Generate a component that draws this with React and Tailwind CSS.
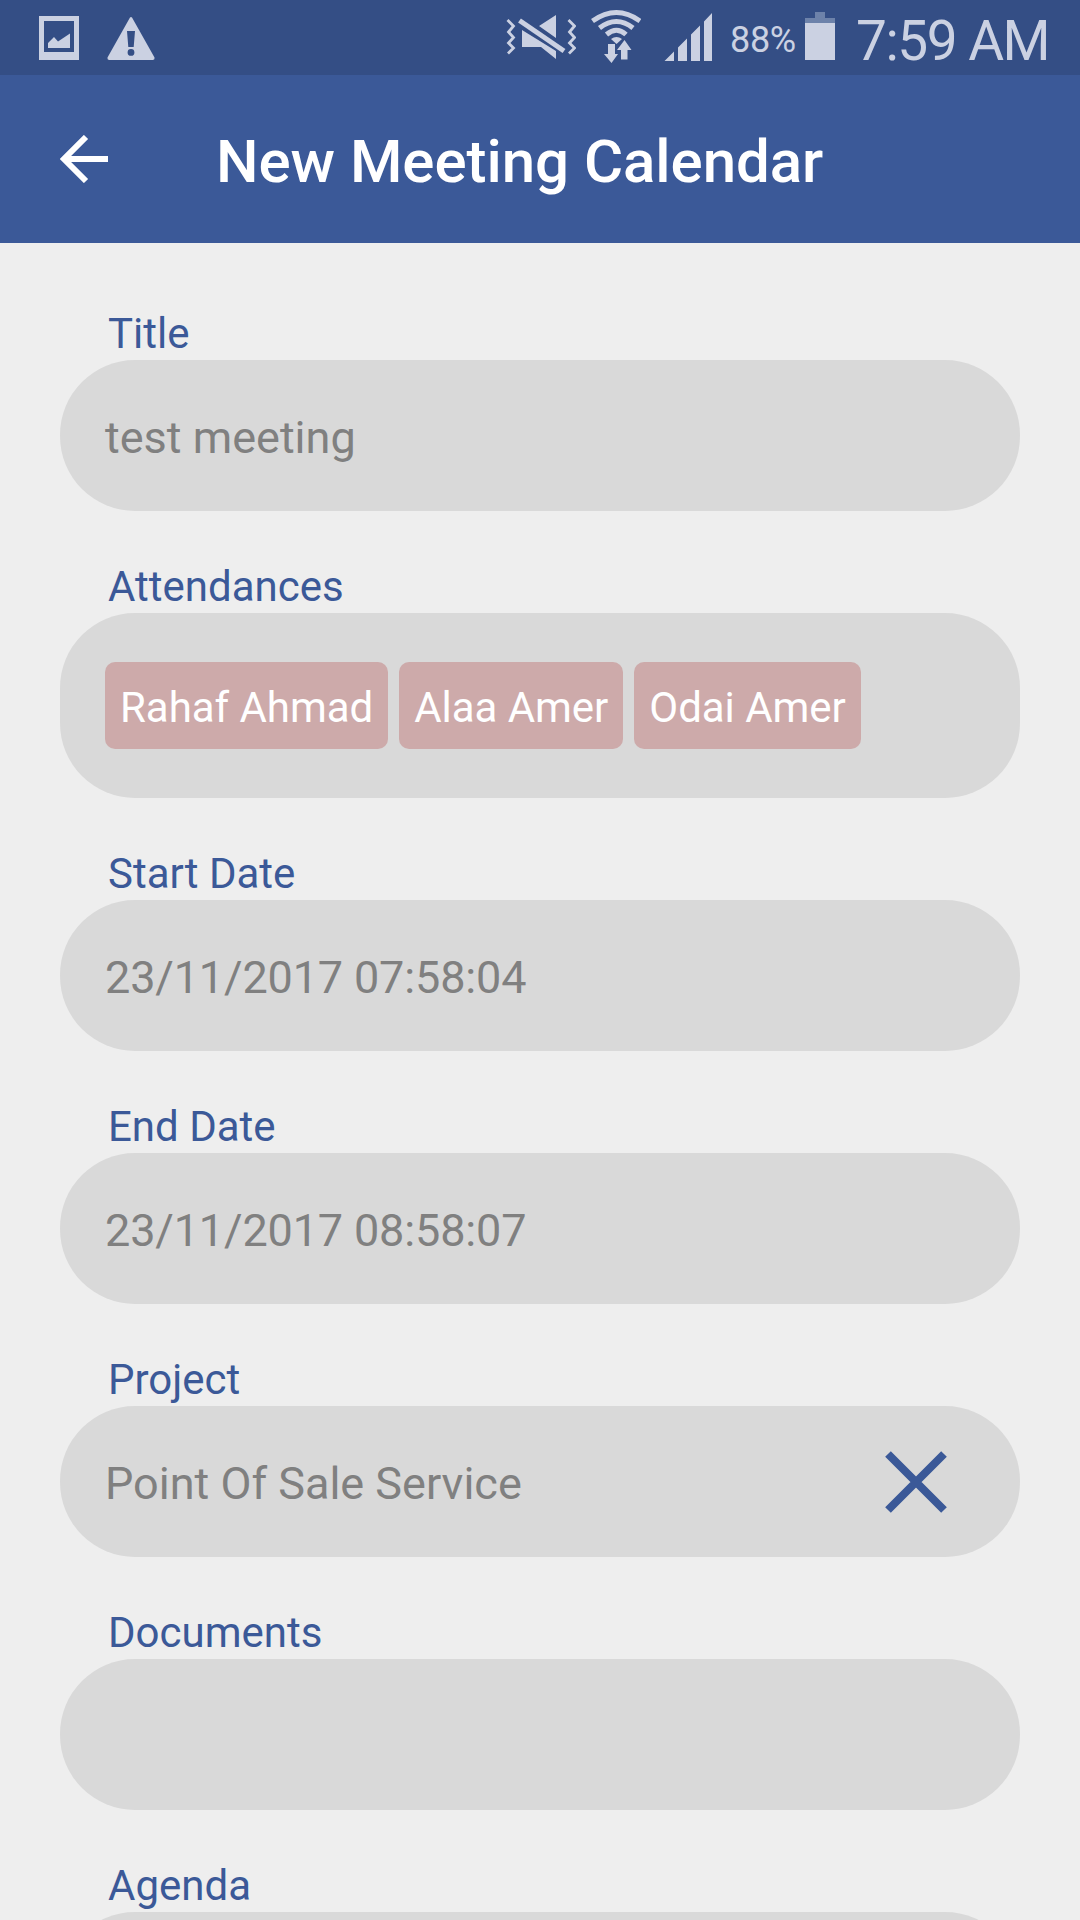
const font = "font-['Roboto',sans-serif]";

function StatusBar() {
  return (
    <div className="flex h-[75px] shrink-0 items-start bg-[#344e85] text-[#cbd1e2]">
      <svg className="ml-[39px] mt-4 h-11 w-10 shrink-0" viewBox="0 0 40 44" fill="currentColor">
        <path fillRule="evenodd" d="M0 0H40V44H0ZM5 5V36H35V5Z" />
        <path d="M9 32V27L15 21L19 25.500L31 17.500V32Z" />
      </svg>
      <svg className="ml-7 mt-4 h-11 w-12 shrink-0" viewBox="107 16 48 44" fill="currentColor">
        <path fillRule="evenodd" d="M130 17.500Q131 16.500 132 17.500L154.500 57.500Q155 59.500 153 60H109Q107 59.500 107.500 57.500ZM127 31L128.300 47H133.700L135 31ZM131 49A3.400 3.400 0 1 0 131 55.800A3.400 3.400 0 1 0 131 49Z" />
      </svg>
      <div className="flex-1" />
      <svg className="h-[75px] w-[70px] shrink-0" viewBox="506 0 70 75" fill="currentColor">
        <path d="M556 15V38L539 26ZM522 30L556 51V59L541 47H522Z" />
        <path d="M519.500 20.500L564 51" stroke="#344e85" strokeWidth="8" fill="none" />
        <path d="M519.500 20.500L564 51" stroke="currentColor" strokeWidth="5" fill="none" />
        <path d="M507.500 20L513.500 26L508.500 32L513.500 37.500L508.500 43L513.500 48L508 53.500M568.500 20L574.500 26L569.500 32L574.500 37.500L569.500 43L574.500 48L569 53.500" stroke="currentColor" strokeWidth="2.800" fill="none" />
      </svg>
      <svg className="ml-[15px] h-[75px] w-[50px] shrink-0" viewBox="591 0 50 75" fill="currentColor">
        <g fill="none" stroke="currentColor" strokeWidth="5">
          <path d="M592.500 21Q616.500 4 640 21" />
          <path d="M599.500 28Q616.500 15 633 28" />
          <path d="M606.500 34.500Q616.500 26 626 34.500" />
        </g>
        <path d="M611 39Q616.500 35 622 39L616.500 44Z" />
        <path d="M608 44H615V54H618L611.500 63L604 54H608Z" />
        <path d="M621 59.500V50H617L624.500 40L631.500 50H627.500V59.500Z" stroke="#344e85" strokeWidth="1" paintOrder="stroke" />
      </svg>
      <svg className="ml-[23px] h-[75px] w-12 shrink-0" viewBox="664 0 48 75" fill="currentColor">
        <path d="M664.500 61L674 51.500V61ZM678 61V47.500L687 38.500V61ZM691 61V34.500L700 25.500V61ZM704 61V21.500L712 13V61Z" />
      </svg>
      <div className="ml-[18px] w-[68px] shrink-0 whitespace-nowrap pt-[19px] text-[36px] leading-[42px] tracking-[-0.3px]">88%</div>
      <svg className="ml-[7px] h-[75px] w-[30px] shrink-0" viewBox="805 0 30 75" fill="currentColor">
        <path d="M815 12H825V18H835V23H805V18H815Z" fill="#6d82aa" />
        <path d="M805 23H835V60H805Z" />
      </svg>
      <div className="ml-[21px] w-[224px] shrink-0 whitespace-nowrap pt-[9px] text-[55px] font-normal leading-[64px] tracking-[-1.5px]">7:59 AM</div>
    </div>
  );
}

function Header() {
  return (
    <header className="flex h-[168px] shrink-0 items-center bg-[#3b5998] pl-[60px] text-white">
      <svg className="h-12 w-12" viewBox="0 0 48 48" fill="none" stroke="currentColor" strokeWidth="6">
        <path d="M48 24H4M26 2L4 24L26 46" />
      </svg>
      <h1 className="ml-[108px] pt-[5px] text-[60px] font-medium leading-[70px] tracking-[-0.05px]">New Meeting Calendar</h1>
    </header>
  );
}

function Field({ label, children, tall }) {
  return (
    <section className="mb-[50px] shrink-0">
      <div className="pl-12 text-[42px] leading-[52px] text-[#3b5998]">{label}</div>
      <div className={`flex items-center rounded-[75px] bg-[#d9d9d9] px-[45px] text-[45px] text-[#808080] ${tall ? "h-[185px]" : "h-[151px]"}`}>
        {children}
      </div>
    </section>
  );
}

function Value({ children, numeric }) {
  return <span className={`flex-1 pt-1 leading-[52px] ${numeric ? "tracking-[-0.15px]" : ""}`}>{children}</span>;
}

function Chip({ children }) {
  return (
    <span className="mr-[11px] flex h-[87px] items-center whitespace-nowrap rounded-[10px] bg-[#cdaaaa] px-[15px] pt-[3px] text-[42px] tracking-[-0.04px] text-white">
      {children}
    </span>
  );
}

export default function App() {
  return (
    <div className={`flex h-[1920px] w-[1080px] flex-col overflow-hidden bg-[#eeeeee] ${font}`}>
      <StatusBar />
      <Header />
      <main className="flex min-h-0 flex-1 flex-col overflow-hidden px-[60px] pt-[65px]">
        <Field label="Title"><Value>test meeting</Value></Field>
        <Field label="Attendances" tall>
          <Chip>Rahaf Ahmad</Chip>
          <Chip>Alaa Amer</Chip>
          <Chip>Odai Amer</Chip>
        </Field>
        <Field label="Start Date"><Value numeric>23/11/2017 07:58:04</Value></Field>
        <Field label="End Date"><Value numeric>23/11/2017 08:58:07</Value></Field>
        <Field label="Project">
          <Value>Point Of Sale Service</Value>
          <svg className="mr-7 h-[62px] w-[62px]" viewBox="0 0 62 62" fill="none" stroke="#3b5998" strokeWidth="8">
            <path d="M3 3L59 59M59 3L3 59" />
          </svg>
        </Field>
        <Field label="Documents" />
        <Field label="Agenda" />
      </main>
    </div>
  );
}
